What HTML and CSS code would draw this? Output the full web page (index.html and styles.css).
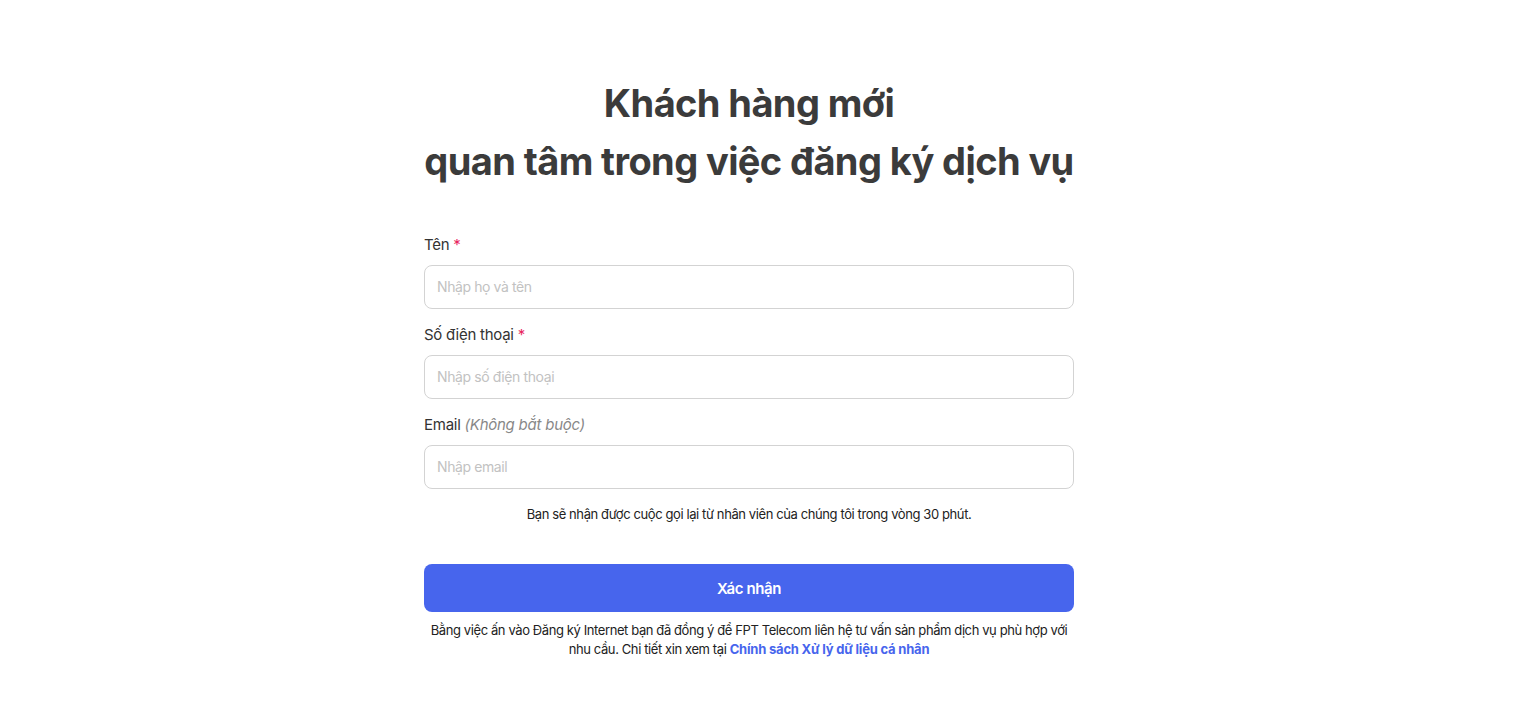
FILE: index.html
```html
<!DOCTYPE html>
<html lang="vi">
<head>
<meta charset="utf-8">
<title>Đăng ký dịch vụ</title>
<link rel="stylesheet" href="styles.css">
</head>
<body>
<main class="page">
  <form class="form">
    <h1 class="title">Khách hàng mới<br>quan tâm trong việc đăng ký dịch vụ</h1>
    <div class="field">
      <label class="label">Tên <span class="req">*</span></label>
      <input class="input" type="text" placeholder="Nhập họ và tên">
    </div>
    <div class="field">
      <label class="label">Số điện thoại <span class="req">*</span></label>
      <input class="input" type="text" placeholder="Nhập số điện thoại">
    </div>
    <div class="field">
      <label class="label">Email <em class="opt">(Không bắt buộc)</em></label>
      <input class="input" type="text" placeholder="Nhập email">
    </div>
    <p class="note">Bạn sẽ nhận được cuộc gọi lại từ nhân viên của chúng tôi trong vòng 30 phút.</p>
    <button class="btn" type="button">Xác nhận</button>
    <p class="terms">Bằng việc ấn vào Đăng ký Internet bạn đã đồng ý để FPT Telecom liên hệ tư vấn sản phẩm dịch vụ phù hợp với nhu cầu. Chi tiết xin xem tại <a class="link" href="#">Chính sách Xử lý dữ liệu cá nhân</a></p>
  </form>
</main>
</body>
</html>
```

FILE: styles.css
```css
* { box-sizing: border-box; }
html, body { margin: 0; padding: 0; background: #fff; }
body { font-family: Inter, "Noto Sans", sans-serif; color: #222; }
.page { display: flex; justify-content: center; padding: 74px 27px 0 0; }
.form { width: 650px; display: flex; flex-direction: column; }
.title {
  margin: 0 0 45px;
  text-align: center;
  font-size: 38px;
  line-height: 58px;
  font-weight: 700;
  color: #3b3b3b;
  letter-spacing: -0.6px;
}
.field { display: flex; flex-direction: column; margin-bottom: 16px; }
.label { font-size: 15px; line-height: 20px; color: #333; margin-bottom: 10px; letter-spacing: -0.25px; }
.req { color: #e8265e; }
.opt { color: #888; font-style: italic; }
.input {
  height: 44px;
  border: 1px solid #d3d3d3;
  border-radius: 8px;
  padding: 0 12px 1px;
  font-family: inherit;
  font-size: 14px;
  letter-spacing: -0.4px;
  color: #333;
  outline: none;
}
.input::placeholder { color: #c2c2c2; }
.note {
  margin: -1px 0 0;
  text-align: center;
  font-size: 13px;
  line-height: 20px;
  letter-spacing: -0.4px;
  color: #222;
}
.btn {
  margin-top: 40px;
  height: 48px;
  border: none;
  border-radius: 8px;
  background: #4765ed;
  color: #fff;
  font-family: inherit;
  font-size: 15px;
  font-weight: 600;
  letter-spacing: -0.4px;
}
.terms {
  margin: 9px 0 0;
  text-align: center;
  font-size: 13px;
  line-height: 19px;
  letter-spacing: -0.4px;
  color: #222;
}
.link { color: #4765ed; font-weight: 700; letter-spacing: -0.2px; text-decoration: none; }
```
